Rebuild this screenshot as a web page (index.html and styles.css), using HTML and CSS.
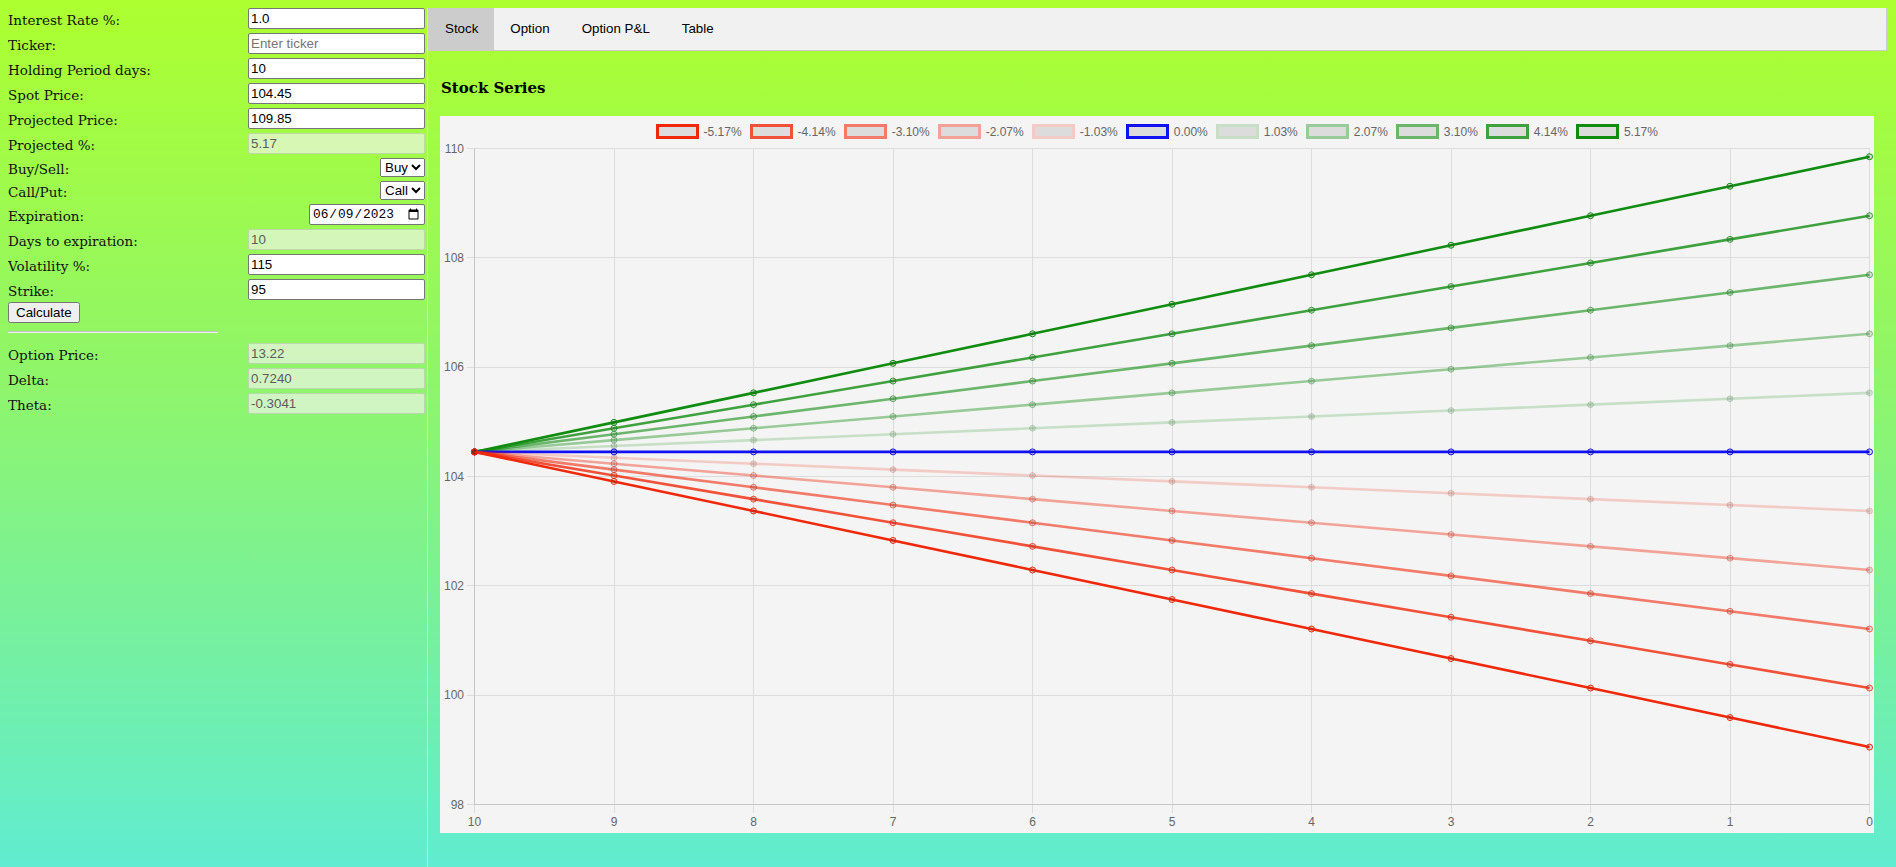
FILE: index.html
```html
<!DOCTYPE html>
<html lang="en">
<head>
<meta charset="utf-8">
<title>Option Calculator</title>
<link rel="stylesheet" href="styles.css">
</head>
<body>
<div class="app">
  <aside class="sidebar">
    <form class="form">
      <div class="row"><label>Interest Rate %:</label><input class="field" type="text" value="1.0"></div>
      <div class="row"><label>Ticker:</label><input class="field" type="text" placeholder="Enter ticker"></div>
      <div class="row"><label>Holding Period days:</label><input class="field" type="text" value="10"></div>
      <div class="row"><label>Spot Price:</label><input class="field" type="text" value="104.45"></div>
      <div class="row"><label>Projected Price:</label><input class="field" type="text" value="109.85"></div>
      <div class="row"><label>Projected %:</label><input class="field ro" type="text" value="5.17" readonly></div>
      <div class="row"><label>Buy/Sell:</label><select class="pick"><option>Buy</option><option>Sell</option></select></div>
      <div class="row"><label>Call/Put:</label><select class="pick"><option>Call</option><option>Put</option></select></div>
      <div class="row"><label>Expiration:</label><input class="date" type="date" value="2023-06-09"></div>
      <div class="row"><label>Days to expiration:</label><input class="field ro" type="text" value="10" readonly></div>
      <div class="row"><label>Volatility %:</label><input class="field" type="text" value="115"></div>
      <div class="row"><label>Strike:</label><input class="field" type="text" value="95"></div>
      <button class="calc" type="button">Calculate</button>
      <hr class="sep">
      <div class="row"><label>Option Price:</label><input class="field ro" type="text" value="13.22" readonly></div>
      <div class="row"><label>Delta:</label><input class="field ro" type="text" value="0.7240" readonly></div>
      <div class="row"><label>Theta:</label><input class="field ro" type="text" value="-0.3041" readonly></div>
    </form>
  </aside>
  <main class="content">
    <div class="tabs">
      <button class="tab active" type="button">Stock</button>
      <button class="tab" type="button">Option</button>
      <button class="tab" type="button">Option P&amp;L</button>
      <button class="tab" type="button">Table</button>
    </div>
    <h3 class="title">Stock Series</h3>
    <div class="chart">
      <div class="legend">
        <span class="lg"><i class="sw r5"></i>-5.17%</span>
        <span class="lg"><i class="sw r4"></i>-4.14%</span>
        <span class="lg"><i class="sw r3"></i>-3.10%</span>
        <span class="lg"><i class="sw r2"></i>-2.07%</span>
        <span class="lg"><i class="sw r1"></i>-1.03%</span>
        <span class="lg"><i class="sw b0"></i>0.00%</span>
        <span class="lg"><i class="sw g1"></i>1.03%</span>
        <span class="lg"><i class="sw g2"></i>2.07%</span>
        <span class="lg"><i class="sw g3"></i>3.10%</span>
        <span class="lg"><i class="sw g4"></i>4.14%</span>
        <span class="lg"><i class="sw g5"></i>5.17%</span>
      </div>
      <svg class="plot" width="1434" height="693" viewBox="0 0 1434 693">
        <g class="grid">
          <line x1="26.5" y1="8.5" x2="1429.5" y2="8.5"/>
          <line x1="26.5" y1="117.5" x2="1429.5" y2="117.5"/>
          <line x1="26.5" y1="227.5" x2="1429.5" y2="227.5"/>
          <line x1="26.5" y1="336.5" x2="1429.5" y2="336.5"/>
          <line x1="26.5" y1="445.5" x2="1429.5" y2="445.5"/>
          <line x1="26.5" y1="555.5" x2="1429.5" y2="555.5"/>
          <line x1="26.5" y1="664.5" x2="1429.5" y2="664.5"/>
          <line x1="34.5" y1="8.5" x2="34.5" y2="672.5"/>
          <line x1="174.5" y1="8.5" x2="174.5" y2="672.5"/>
          <line x1="313.5" y1="8.5" x2="313.5" y2="672.5"/>
          <line x1="453.5" y1="8.5" x2="453.5" y2="672.5"/>
          <line x1="592.5" y1="8.5" x2="592.5" y2="672.5"/>
          <line x1="732.5" y1="8.5" x2="732.5" y2="672.5"/>
          <line x1="871.5" y1="8.5" x2="871.5" y2="672.5"/>
          <line x1="1011.5" y1="8.5" x2="1011.5" y2="672.5"/>
          <line x1="1150.5" y1="8.5" x2="1150.5" y2="672.5"/>
          <line x1="1290.5" y1="8.5" x2="1290.5" y2="672.5"/>
          <line x1="1429.5" y1="8.5" x2="1429.5" y2="672.5"/>
        </g>
        <g class="axis">
          <line x1="34.5" y1="8.5" x2="34.5" y2="664.5"/>
          <line x1="34.5" y1="664.5" x2="1429.5" y2="664.5"/>
        </g>
        <g class="ylabels">
          <text x="24" y="8.5">110</text>
          <text x="24" y="117.8">108</text>
          <text x="24" y="227.2">106</text>
          <text x="24" y="336.5">104</text>
          <text x="24" y="445.8">102</text>
          <text x="24" y="555.2">100</text>
          <text x="24" y="664.5">98</text>
        </g>
        <g class="xlabels">
          <text x="34.5" y="682">10</text>
          <text x="174" y="682">9</text>
          <text x="313.5" y="682">8</text>
          <text x="453" y="682">7</text>
          <text x="592.5" y="682">6</text>
          <text x="732" y="682">5</text>
          <text x="871.5" y="682">4</text>
          <text x="1011" y="682">3</text>
          <text x="1150.5" y="682">2</text>
          <text x="1290" y="682">1</text>
          <text x="1429.5" y="682">0</text>
        </g>
        <g class="series"></g>
      </svg>
    </div>
  </main>
</div>
<script src="script.js"></script>
</body>
</html>
```

FILE: styles.css
```css
html {
  min-height: 100%;
  background: linear-gradient(to bottom, #adff2f 0%, #8ef56c 45%, #60ecd0 100%);
}

body {
  margin: 8px 8px 0 8px;
}

.app {
  display: flex;
  align-items: stretch;
  min-height: calc(100vh - 8px);
}

.sidebar {
  width: 417px;
  padding-right: 2px;
  border-right: 1px solid rgba(232, 232, 232, 0.75);
  flex: none;
}

.form {
  display: flex;
  flex-direction: column;
}

.row {
  display: flex;
  justify-content: space-between;
  align-items: center;
  margin-bottom: 4px;
}

.row label {
  font-family: "DejaVu Serif", serif;
  font-size: 13.5px;
  color: #111;
  padding-top: 3px;
}

.field {
  box-sizing: border-box;
  width: 177px;
  height: 21px;
  font-family: "Liberation Sans", Arial, sans-serif;
  font-size: 13.33px;
  padding: 1px 2px;
  border: 1px solid #767676;
  border-radius: 2px;
  background: #fff;
  color: #000;
  margin: 0;
}

.field::placeholder {
  color: #757575;
}

.field.ro {
  background: rgba(240, 245, 235, 0.68);
  border-color: rgba(118, 118, 118, 0.25);
  color: #5c5c5c;
}

.pick {
  font-family: "Liberation Sans", Arial, sans-serif;
  font-size: 13.33px;
  height: 19px;
  margin: 0;
}

.date {
  box-sizing: border-box;
  width: 116px;
  height: 21px;
  font-family: "Liberation Mono", monospace;
  font-size: 12.8px;
  padding: 1px 2px;
  margin: 0;
  border: 1px solid #767676;
  border-radius: 2px;
  background: #fff;
}

.calc {
  align-self: flex-start;
  font-family: "Liberation Sans", Arial, sans-serif;
  font-size: 13.33px;
  height: 21px;
  margin: -2px 0 0 0;
}

.sep {
  width: 210px;
  margin: 8px 0 10px 0;
  border: none;
  border-top: 1px solid #c4c4c4;
  border-bottom: 1px solid #f0f0f0;
}

.content {
  flex: 1;
  min-width: 0;
  margin-top: -1px;
  margin-right: 1px;
}

.tabs {
  display: flex;
  background: #f1f1f1;
  border: 1px solid #ccc;
}

.tab {
  font-family: "Liberation Sans", Arial, sans-serif;
  font-size: 13.33px;
  line-height: 14px;
  padding: 14px 16px;
  border: none;
  background: transparent;
  color: #000;
  margin: 0;
}

.tab.active {
  background: #ccc;
}

.title {
  font-family: "DejaVu Serif", serif;
  font-weight: bold;
  font-size: 15px;
  line-height: 20px;
  margin: 27px 0 18px 13px;
  color: #000;
}

.chart {
  width: 1434px;
  height: 717px;
  margin-left: 12px;
  background: #f4f4f4;
}

.legend {
  display: flex;
  justify-content: center;
  align-items: center;
  height: 15px;
  padding: 8px 0 1px 0;
  font-family: "Liberation Sans", Arial, sans-serif;
  font-size: 12px;
  color: #666;
}

.lg {
  display: flex;
  align-items: center;
  margin-right: 8.5px;
  white-space: nowrap;
}

.lg:last-child {
  margin-right: 0;
}

.sw {
  display: block;
  width: 37px;
  height: 9px;
  border: 3px solid;
  background: #dcdcdc;
  margin-right: 4.5px;
}

.r5 { border-color: rgb(240, 40, 10); }
.r4 { border-color: rgb(241, 81, 57); }
.r3 { border-color: rgb(242, 122, 104); }
.r2 { border-color: rgb(242, 162, 150); }
.r1 { border-color: rgb(243, 203, 197); }
.b0 { border-color: rgb(16, 16, 240); }
.g1 { border-color: rgb(198, 223, 198); }
.g2 { border-color: rgb(153, 202, 153); }
.g3 { border-color: rgb(107, 182, 107); }
.g4 { border-color: rgb(62, 161, 62); }
.g5 { border-color: rgb(16, 140, 16); }

.plot {
  display: block;
  overflow: visible;
}

.grid line {
  stroke: #dcdcdc;
  stroke-width: 1;
  shape-rendering: crispEdges;
}

.axis line {
  stroke: rgba(0, 0, 0, 0.1);
  stroke-width: 1;
  shape-rendering: crispEdges;
}

.ylabels text,
.xlabels text {
  font-family: "Liberation Sans", Arial, sans-serif;
  font-size: 12px;
  fill: #666;
  dominant-baseline: central;
}

.ylabels text {
  text-anchor: end;
}

.xlabels text {
  text-anchor: middle;
}
```

FILE: script.js
```js
(function () {
  var NS = 'http://www.w3.org/2000/svg';
  var group = document.querySelector('.series');
  var L = 34.5, step = 139.5, T = 8.5, B = 664.5;
  var perUnit = (B - T) / 12;
  var spot = 104.45, maxPct = 5.17;
  var red = [240, 40, 10], green = [16, 140, 16], blue = [16, 16, 240];

  for (var k = 5; k >= -5; k--) {
    var base = k < 0 ? red : (k > 0 ? green : blue);
    var a = k === 0 ? 1 : Math.abs(k) / 5;
    var color = 'rgba(' + base.join(',') + ',' + a + ')';
    var pts = [];
    for (var i = 0; i <= 10; i++) {
      var v = spot * (1 + (maxPct / 100) * (k / 5) * (i / 10));
      pts.push([L + i * step, T + (110 - v) * perUnit]);
    }
    var pl = document.createElementNS(NS, 'polyline');
    pl.setAttribute('points', pts.map(function (p) { return p[0].toFixed(2) + ',' + p[1].toFixed(2); }).join(' '));
    pl.setAttribute('fill', 'none');
    pl.setAttribute('stroke', color);
    pl.setAttribute('stroke-width', '2.6');
    pl.setAttribute('stroke-linejoin', 'round');
    group.appendChild(pl);
    pts.forEach(function (p) {
      var c = document.createElementNS(NS, 'circle');
      c.setAttribute('cx', p[0].toFixed(2));
      c.setAttribute('cy', p[1].toFixed(2));
      c.setAttribute('r', '3');
      c.setAttribute('fill', 'rgba(0,0,0,0.1)');
      c.setAttribute('stroke', color);
      c.setAttribute('stroke-width', '1');
      group.appendChild(c);
    });
  }
})();
```
